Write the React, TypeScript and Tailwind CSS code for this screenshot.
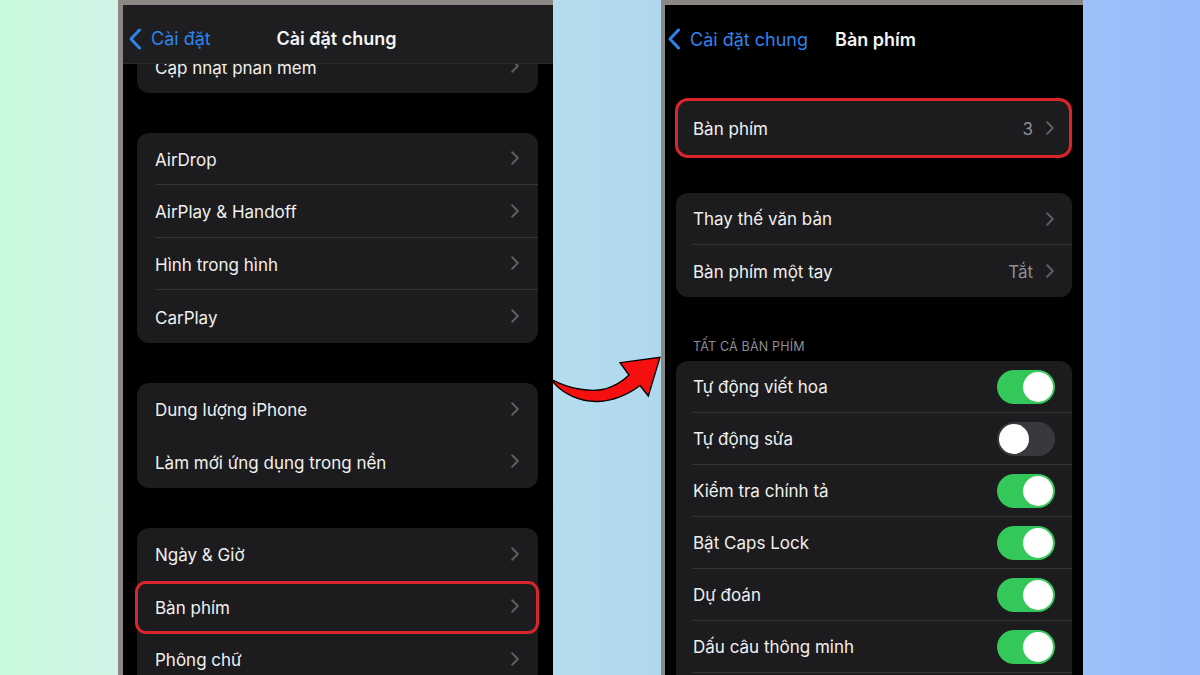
import React from "react";

const Chevron = () => (
  <svg width="8" height="14" viewBox="0 0 8 14" fill="none">
    <path d="M1.2 1.2L6.8 7L1.2 12.8" stroke="#5d5d62" strokeWidth="2" strokeLinecap="round" strokeLinejoin="round" />
  </svg>
);

const BackChevron = () => (
  <svg width="14" height="22" viewBox="0 0 14 22" fill="none">
    <path d="M11.5 2L3 11L11.5 20" stroke="#2f84ec" strokeWidth="3" strokeLinecap="round" strokeLinejoin="round" />
  </svg>
);

const Toggle = ({ on }: { on: boolean }) => (
  <div
    className={
      on
        ? "w-[58px] h-[34px] rounded-full bg-[#34c759] p-[2px] flex justify-end"
        : "w-[58px] h-[34px] rounded-full bg-[#39393d] p-[2px] flex justify-start"
    }
  >
    <div className="w-[30px] h-[30px] rounded-full bg-white" />
  </div>
);

type LRow = { label: string; last?: boolean; mark?: boolean };

const LeftRow = ({ label, last, mark }: LRow) => (
  <div className="relative h-[52.5px] pl-[18px] flex">
    <div
      className={
        "flex-1 flex items-center justify-between pr-[19px] " +
        (last ? "" : "border-b border-[#353537]")
      }
    >
      <span className="text-[17px] text-[#f0f0f0] pt-[4px]">{label}</span>
      <Chevron />
    </div>
    {mark && (
      <span className="absolute -left-[2px] -right-[1px] top-[1px] -bottom-[1px] rounded-[11px] border-[3px] border-[#d8262c]" />
    )}
  </div>
);

const LeftGroup = ({ rows, noSep }: { rows: LRow[]; noSep?: boolean }) => (
  <div className="ml-[14px] mr-[15px] rounded-[12px] bg-[#1c1c1e] shrink-0">
    {rows.map((r, i) => (
      <LeftRow key={r.label} {...r} last={noSep || i === rows.length - 1} />
    ))}
  </div>
);

type RRow = { label: string; value?: string; toggle?: boolean | null; last?: boolean };

const RightRow = ({ label, value, toggle, last }: RRow) => (
  <div className="h-[52px] pl-[17px] flex shrink-0">
    <div
      className={
        "flex-1 flex items-center justify-between " +
        (toggle === undefined || toggle === null ? "pr-[18px] " : "pr-[17px] ") +
        (last ? "" : "border-b border-[#353537]")
      }
    >
      <span className="text-[17px] text-[#f0f0f0] pt-[3px]">{label}</span>
      {toggle === undefined || toggle === null ? (
        <div className="flex items-center gap-[13px]">
          {value && <span className="text-[17px] text-[#8e8e93] pt-[3px]">{value}</span>}
          <Chevron />
        </div>
      ) : (
        <Toggle on={toggle} />
      )}
    </div>
  </div>
);

export default function App() {
  return (
    <div className="w-[1200px] h-[675px] overflow-hidden flex bg-[linear-gradient(90deg,#c7fadb_0%,#d2f3e7_10%,#b2dbee_50%,#9dc1fa_90%,#97bbfb_100%)] font-[family-name:Inter,'Noto_Sans',sans-serif]">
      <div className="w-[118px] shrink-0" />

      {/* Left phone */}
      <div className="w-[435px] shrink-0 h-full border-l-[5px] border-t-[5px] border-[#8b8784] bg-black relative overflow-hidden">
        <div className="pt-[35px] flex flex-col gap-[40px]">
          <LeftGroup rows={[{ label: "Cập nhật phần mềm" }]} />
          <LeftGroup
            rows={[
              { label: "AirDrop" },
              { label: "AirPlay & Handoff" },
              { label: "Hình trong hình" },
              { label: "CarPlay" },
            ]}
          />
          <LeftGroup
            noSep
            rows={[{ label: "Dung lượng iPhone" }, { label: "Làm mới ứng dụng trong nền" }]}
          />
          <LeftGroup
            noSep
            rows={[{ label: "Ngày & Giờ" }, { label: "Bàn phím", mark: true }, { label: "Phông chữ" }]}
          />
        </div>
        <div className="absolute top-0 left-0 right-0 h-[59px] bg-[#1e1e20] border-b border-[#2a2a2c] grid grid-cols-[1fr_auto_1fr] items-center pt-[9px]">
          <div className="flex items-center gap-[9px] pl-[5px]">
            <BackChevron />
            <span className="text-[18px] text-[#2f84ec]">Cài đặt</span>
          </div>
          <span className="text-[18px] font-semibold text-[#f4f4f4] pr-[3px]">Cài đặt chung</span>
          <div />
        </div>
      </div>

      {/* Arrow column */}
      <div className="w-[108px] shrink-0 pt-[354px]">
        <svg width="108" height="50" viewBox="553 354 108 50">
          <path
            d="M552.7,380 C568,388 590,393 605,389 C615,386 623,381 629,375 L620,362.7 L660,357.3 L648.3,396 L640,385.5 C628,395 612,401 598,401.5 C580,402 563,394 552.7,381.7 Z"
            fill="#f50f0f"
            stroke="#000"
            strokeWidth="1.3"
            strokeLinejoin="miter"
          />
        </svg>
      </div>

      {/* Right phone */}
      <div className="w-[422px] shrink-0 h-full border-l-[4px] border-t-[5px] border-[#8b8784] bg-black overflow-hidden flex flex-col">
        <div className="h-[68px] flex items-center pl-[2px] shrink-0">
          <div className="flex items-center gap-[9px]">
            <BackChevron />
            <span className="text-[18px] text-[#2f84ec]">Cài đặt chung</span>
          </div>
          <span className="ml-[27px] text-[18px] font-semibold text-[#f4f4f4]">Bàn phím</span>
        </div>

        <div className="shrink-0 mt-[25px] ml-[10px] mr-[11px] h-[60px] rounded-[13px] border-[3px] border-[#d8262c] bg-[#1c1c1e] flex items-center justify-between pl-[15px] pr-[15px]">
          <span className="text-[17px] text-[#f0f0f0] pt-[3px]">Bàn phím</span>
          <div className="flex items-center gap-[13px]">
            <span className="text-[17px] text-[#8e8e93] pt-[3px]">3</span>
            <Chevron />
          </div>
        </div>

        <div className="shrink-0 mt-[35px] mx-[11px] rounded-[12px] bg-[#1c1c1e]">
          <RightRow label="Thay thế văn bản" />
          <RightRow label="Bàn phím một tay" value="Tắt" last />
        </div>

        <div className="shrink-0 mt-[42px] h-[16px] pl-[28px] flex items-center text-[12.5px] text-[#8d8d92] tracking-[0.2px]">
          TẤT CẢ BÀN PHÍM
        </div>

        <div className="shrink-0 mt-[6px] mx-[11px] rounded-[12px] bg-[#1c1c1e] pb-[20px]">
          <RightRow label="Tự động viết hoa" toggle={true} />
          <RightRow label="Tự động sửa" toggle={false} />
          <RightRow label="Kiểm tra chính tả" toggle={true} />
          <RightRow label="Bật Caps Lock" toggle={true} />
          <RightRow label="Dự đoán" toggle={true} />
          <RightRow label="Dấu câu thông minh" toggle={true} />
        </div>
      </div>

      <div className="flex-1" />
    </div>
  );
}
